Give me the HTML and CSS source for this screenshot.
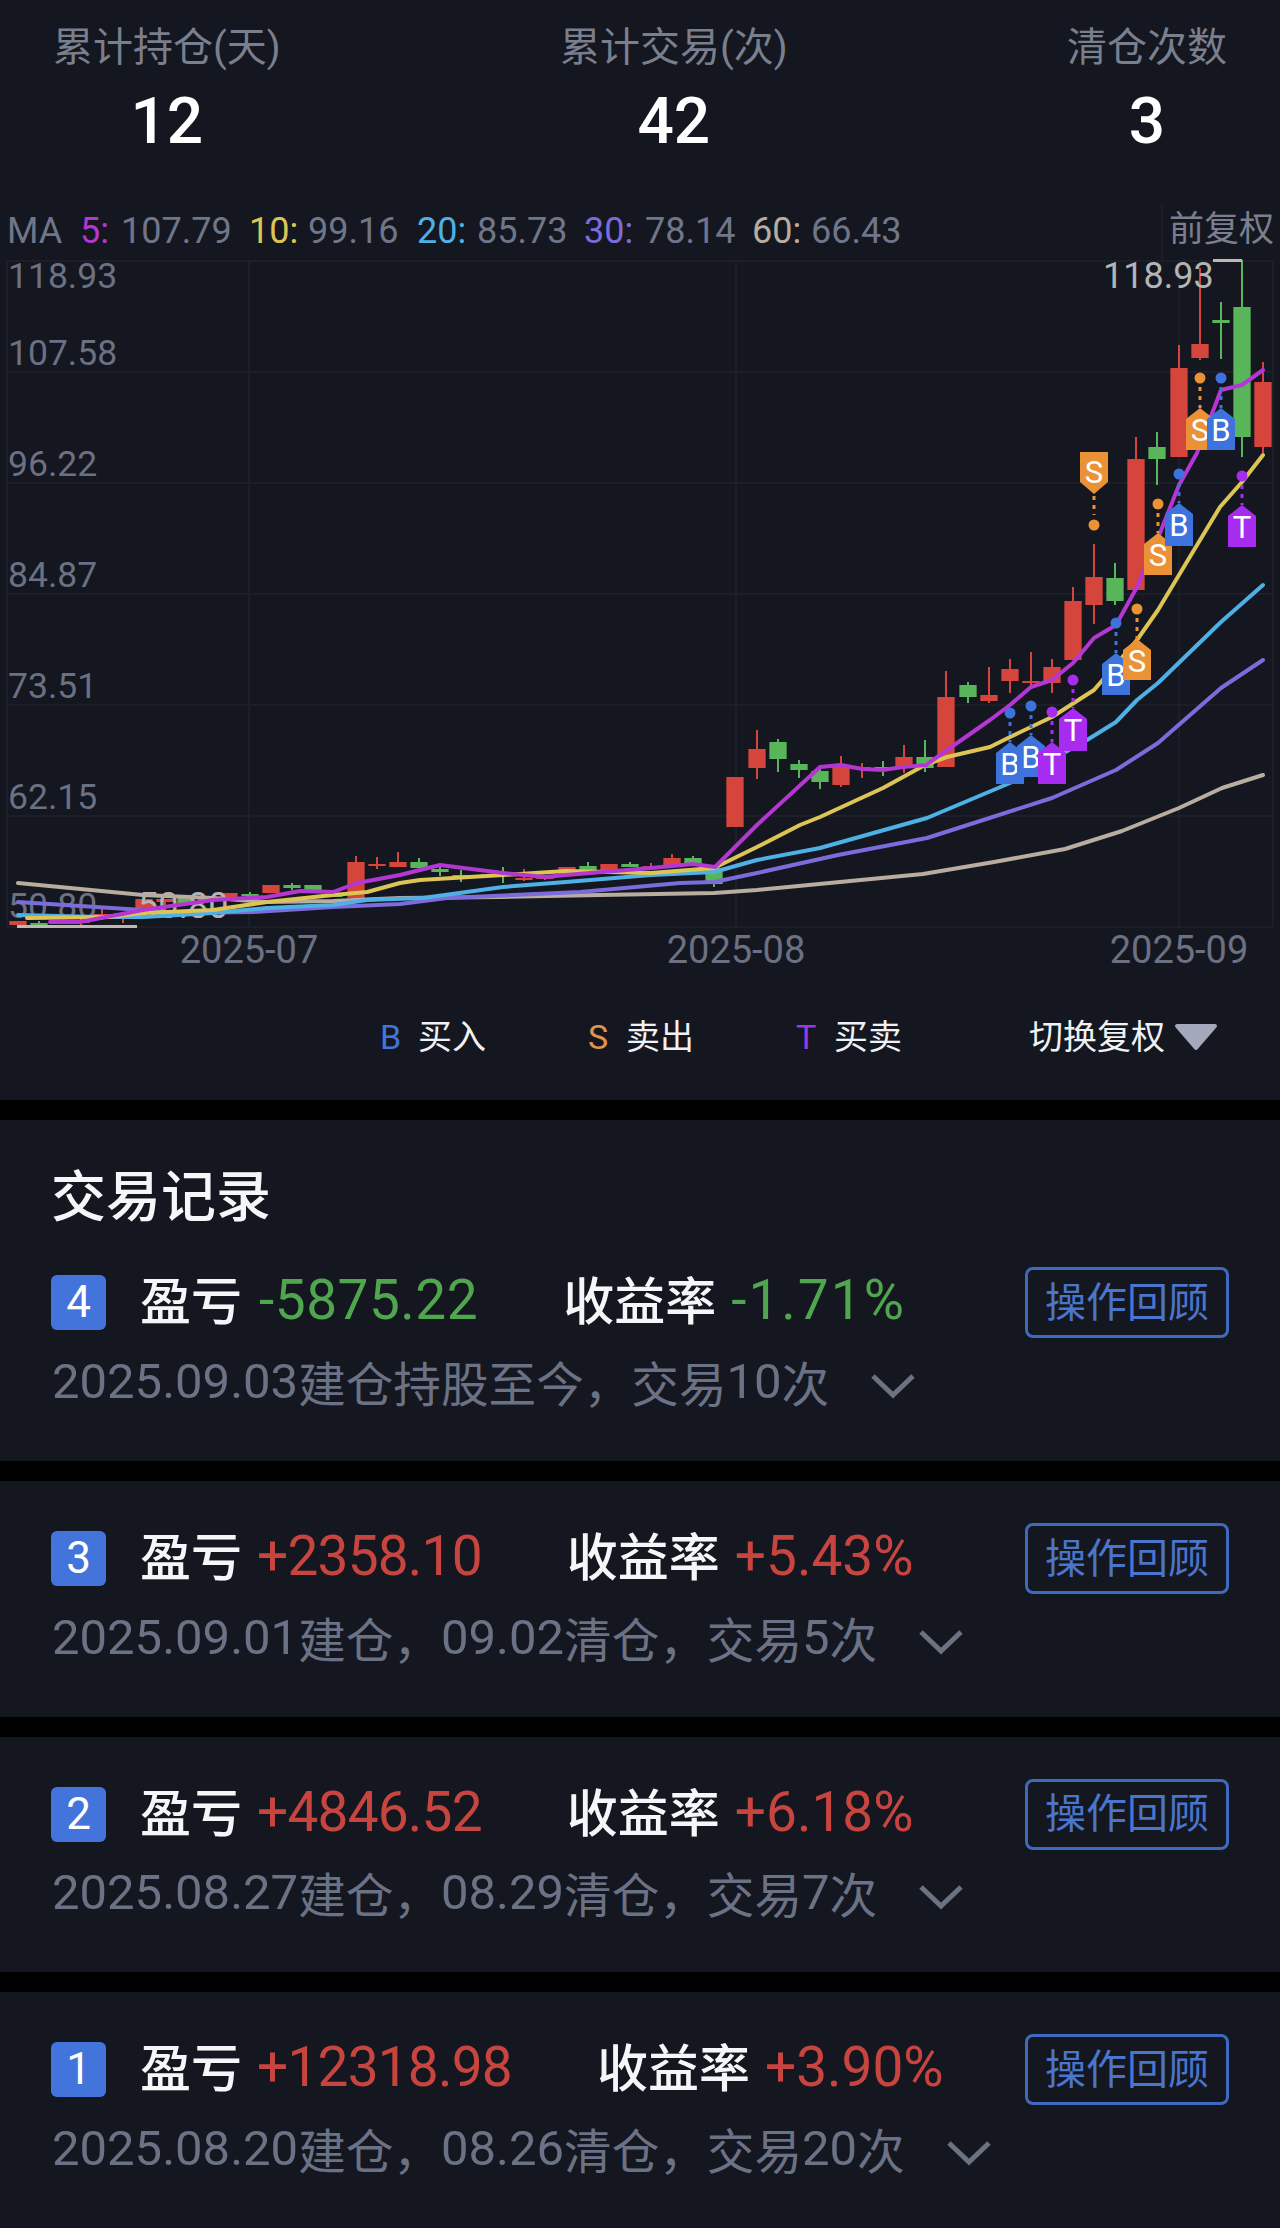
FILE: index.html
```html
<!DOCTYPE html>
<html lang="zh-CN">
<head>
<meta charset="utf-8">
<title>交易记录</title>
<link rel="stylesheet" href="styles.css">
</head>
<body>
<main class="page">
  <section class="panel">
    <div class="stats">
      <div class="stat"><div class="stat-label">累计持仓(天)</div><div class="stat-value">12</div></div>
      <div class="stat"><div class="stat-label">累计交易(次)</div><div class="stat-value">42</div></div>
      <div class="stat"><div class="stat-label">清仓次数</div><div class="stat-value">3</div></div>
    </div>
    <svg class="chart" viewBox="0 200 1280 780" width="1280" height="780">
      <path class="grid" d="M7 261H1273M7 372H1273M7 483H1273M7 594H1273M7 705H1273M7 816H1273M7 927H1273M7 261V927M249 261V927M736 261V927M1179 261V927M1273 261V927M1162 205V261"/>

      <text class="ma" y="243"><tspan x="7">MA</tspan><tspan x="80" class="k5">5:</tspan><tspan x="121">107.79</tspan><tspan x="249" class="k10">10:</tspan><tspan x="308">99.16</tspan><tspan x="417" class="k20">20:</tspan><tspan x="477">85.73</tspan><tspan x="584" class="k30">30:</tspan><tspan x="645">78.14</tspan><tspan x="752" class="k60">60:</tspan><tspan x="811">66.43</tspan></text>
      <text class="cn-label" x="1169" y="241">前复权</text>

      <g class="axis">
        <text x="8" y="288">118.93</text>
        <text x="8" y="365">107.58</text>
        <text x="8" y="476">96.22</text>
        <text x="8" y="587">84.87</text>
        <text x="8" y="698">73.51</text>
        <text x="8" y="809">62.15</text>
        <text x="8" y="918">50.80</text>
      </g>
      <g class="dates">
        <text x="249" y="963">2025-07</text>
        <text x="736" y="963">2025-08</text>
        <text x="1179" y="963">2025-09</text>
      </g>

      <path class="wick up" d="M102 908V920M123 912V923M165 899V912M356 856V898M377 857V869M398 852V867M482 874V878M524 869V881M545 875V880M651 863V870M672 854V865M757 730V779M841 756V787M862 763V778M904 745V773M946 671V767M989 667V703M1010 659V693M1031 652V687M1052 659V693M1073 587V660M1094 544V624M1136 437V590M1179 345V457M1200 268V360M1263 362V453M81 919V925"/>
      <path class="wick down" d="M39 921V926M250 892V897M292 883V890M419 858V868M440 865V876M461 870V882M503 867V883M588 862V871M630 862V867M693 856V865M714 868V887M778 739V772M799 760V778M820 768V789M883 761V776M925 740V772M968 682V703M1115 563V605M1157 432V485M1221 302V359M1242 260V457"/>
      <path class="body up" d="M18 921V925M60 922V924M81 921V923M102 914V916M123 913V915M144 899V913M165 899V902M207 897V901M229 893V900M271 885V893M356 862V898M377 864V866M398 862V867M482 875V877M524 878V880M545 877V879M567 867V875M609 864V873M651 866V869M672 858V865M735 777V827M757 749V768M841 765V785M862 767V769M904 757V767M946 697V767M989 695V701M1010 669V681M1031 681V683M1052 667V683M1073 601V660M1094 577V605M1136 459V590M1179 368V457M1200 344V358M1263 382V447"/>
      <path class="body down" d="M39 923V925M186 898V903M250 894V896M292 885V888M313 885V890M334 895V897M419 862V868M440 869V872M461 875V877M503 874V876M588 866V871M630 864V867M693 858V865M714 868V884M778 742V759M799 764V770M820 771V782M883 767V769M925 757V768M968 685V697M1115 578V601M1157 447V459M1221 320V323M1242 307V437"/>

      <text class="extreme" x="1103" y="288">118.93</text>
      <text class="extreme" x="138" y="918">50.80</text>
      <path class="leader" d="M1213 260.500H1242M17 926.500H137"/>

      <polyline class="line l60" points="18,883 143,895 213,898 267,902 333,901 400,898 500,897 600,895 714,893 757,890 840,882 923,874 994,862 1065,849 1122,831 1179,808 1222,788 1263,775"/>
      <polyline class="line l30" points="18,902 143,910 180,913 253,912 333,907 400,904 447,898 580,892 680,883 714,882 757,873 838,855 927,838 1052,798 1116,770 1158,743 1221,688 1263,660"/>
      <polyline class="line l20" points="18,915 100,917 143,917 213,913 267,908 333,905 367,900 423,898 503,887 566,882 651,875 714,872 757,860 820,848 927,818 1010,783 1087,740 1116,722 1137,700 1158,683 1221,622 1263,585"/>
      <polyline class="line l10" points="27,918 110,917 143,913 213,910 267,902 333,895 367,892 400,883 420,880 503,875 566,871 651,873 714,868 757,847 800,825 820,817 883,788 925,765 947,757 990,747 1010,737 1052,717 1094,690 1137,640 1158,610 1188,560 1220,507 1242,482 1263,455"/>
      <polyline class="line l5" points="50,922 80,922 143,910 213,900 267,897 300,891 333,892 357,883 400,875 440,865 503,873 545,877 566,875 651,868 693,864 715,867 757,825 820,767 841,765 862,769 883,770 903,767 926,765 950,748 990,720 1010,705 1031,687 1052,680 1073,663 1094,638 1116,625 1137,587 1160,533 1179,485 1197,453 1221,390 1242,385 1263,370"/>

      <g class="mark sell"><circle cx="1094" cy="525" r="5.500"/><path class="stem" d="M1094 496V515"/><path d="M1080 452H1108V482L1094 494L1080 482Z"/><text x="1094" y="483">S</text></g>
      <g class="mark buy"><circle cx="1010" cy="713" r="5.500"/><path class="stem" d="M1010 722V742"/><path d="M996 753L1010 742L1024 753V784H996Z"/><text x="1010" y="775">B</text></g>
      <g class="mark buy"><circle cx="1031" cy="706" r="5.500"/><path class="stem" d="M1031 715V735"/><path d="M1017 746L1031 735L1045 746V777H1017Z"/><text x="1031" y="768">B</text></g>
      <g class="mark trade"><circle cx="1052" cy="712" r="5.500"/><path class="stem" d="M1052 721V742"/><path d="M1038 753L1052 742L1066 753V784H1038Z"/><text x="1052" y="775">T</text></g>
      <g class="mark trade"><circle cx="1073" cy="680" r="5.500"/><path class="stem" d="M1073 689V708"/><path d="M1059 719L1073 708L1087 719V751H1059Z"/><text x="1073" y="741">T</text></g>
      <g class="mark buy"><circle cx="1116" cy="623" r="5.500"/><path class="stem" d="M1116 632V653"/><path d="M1102 664L1116 653L1130 664V695H1102Z"/><text x="1116" y="686">B</text></g>
      <g class="mark sell"><circle cx="1137" cy="609" r="5.500"/><path class="stem" d="M1137 618V639"/><path d="M1123 650L1137 639L1151 650V680H1123Z"/><text x="1137" y="672">S</text></g>
      <g class="mark sell"><circle cx="1158" cy="504" r="5.500"/><path class="stem" d="M1158 513V533"/><path d="M1144 544L1158 533L1172 544V575H1144Z"/><text x="1158" y="566">S</text></g>
      <g class="mark buy"><circle cx="1179" cy="474" r="5.500"/><path class="stem" d="M1179 483V503"/><path d="M1165 514L1179 503L1193 514V546H1165Z"/><text x="1179" y="536">B</text></g>
      <g class="mark sell"><circle cx="1200" cy="378" r="5.500"/><path class="stem" d="M1200 387V408"/><path d="M1186 419L1200 408L1214 419V450H1186Z"/><text x="1200" y="441">S</text></g>
      <g class="mark buy"><circle cx="1221" cy="378" r="5.500"/><path class="stem" d="M1221 387V408"/><path d="M1207 419L1221 408L1235 419V450H1207Z"/><text x="1221" y="441">B</text></g>
      <g class="mark trade"><circle cx="1242" cy="476" r="5.500"/><path class="stem" d="M1242 485V505"/><path d="M1228 516L1242 505L1256 516V547H1228Z"/><text x="1242" y="538">T</text></g>
    </svg>
    <div class="legend">
      <div class="legend-item"><span class="letter buy-text">B</span>买入</div>
      <div class="legend-item"><span class="letter sell-text">S</span>卖出</div>
      <div class="legend-item"><span class="letter trade-text">T</span>买卖</div>
      <div class="toggle">切换复权<svg class="toggle-arrow" viewBox="0 0 44 28" width="44" height="28"><path d="M3 3H41L22 25Z"/></svg></div>
    </div>
  </section>

  <section class="panel records">
    <h2 class="records-title">交易记录</h2>
    <article class="record">
      <div class="record-main">
        <span class="badge">4</span><span class="term">盈亏</span><span class="amount pnl loss">-5875.22</span><span class="term term-rate">收益率</span><span class="amount rate-wide loss">-1.71%</span>
        <button class="review">操作回顾</button>
      </div>
      <div class="record-sub"><span class="digits">2025.09.03</span>建仓持股至今，交易<span class="digits">10</span>次<svg class="chevron" viewBox="0 0 44 26" width="44" height="26"><path d="M2 3L22 22L42 3"/></svg></div>
    </article>
  </section>

  <section class="panel record">
    <div class="record-main">
      <span class="badge">3</span><span class="term">盈亏</span><span class="amount pnl gain">+2358.10</span><span class="term term-rate">收益率</span><span class="amount gain">+5.43%</span>
      <button class="review">操作回顾</button>
    </div>
    <div class="record-sub"><span class="digits">2025.09.01</span>建仓，<span class="digits">09.02</span>清仓，交易<span class="digits">5</span>次<svg class="chevron" viewBox="0 0 44 26" width="44" height="26"><path d="M2 3L22 22L42 3"/></svg></div>
  </section>

  <section class="panel record">
    <div class="record-main">
      <span class="badge">2</span><span class="term">盈亏</span><span class="amount pnl gain">+4846.52</span><span class="term term-rate">收益率</span><span class="amount gain">+6.18%</span>
      <button class="review">操作回顾</button>
    </div>
    <div class="record-sub"><span class="digits">2025.08.27</span>建仓，<span class="digits">08.29</span>清仓，交易<span class="digits">7</span>次<svg class="chevron" viewBox="0 0 44 26" width="44" height="26"><path d="M2 3L22 22L42 3"/></svg></div>
  </section>

  <section class="panel record">
    <div class="record-main">
      <span class="badge">1</span><span class="term">盈亏</span><span class="amount pnl gain">+12318.98</span><span class="term term-rate">收益率</span><span class="amount gain">+3.90%</span>
      <button class="review">操作回顾</button>
    </div>
    <div class="record-sub"><span class="digits">2025.08.20</span>建仓，<span class="digits">08.26</span>清仓，交易<span class="digits">20</span>次<svg class="chevron" viewBox="0 0 44 26" width="44" height="26"><path d="M2 3L22 22L42 3"/></svg></div>
  </section>
</main>
</body>
</html>
```
FILE: styles.css
```css
* { box-sizing: border-box; }
html, body { margin: 0; padding: 0; background: #000; }
body { font-family: Roboto, "Noto Sans CJK SC", sans-serif; color: #fff; }
.page { width: 1280px; height: 2228px; display: flex; flex-direction: column; gap: 20px; overflow: hidden; }
.panel { background: #141720; }

.stats { height: 200px; padding: 21px 53px 0; display: flex; justify-content: space-between; }
.stat { text-align: center; }
.stat-label { font-size: 40px; line-height: 54px; color: #7a7f8e; }
.stat-value { font-size: 64px; line-height: 74px; margin-top: 10px; font-weight: 500; color: #fff; }

.chart { display: block; font-family: Roboto, "Noto Sans CJK SC", sans-serif; }
.grid { fill: none; stroke: #1c1f27; stroke-width: 2; }
.ma { font-size: 36px; fill: #70768a; }
.k5 { fill: #b437d4; }
.k10 { fill: #dcc555; }
.k20 { fill: #4fb0e6; }
.k30 { fill: #7c6bdb; }
.k60 { fill: #b8ad9f; }
.cn-label { font-size: 35px; fill: #7a7f8e; }
.axis text { font-size: 35.500px; fill: #6b7183; }
.dates text { font-size: 38px; fill: #6b7183; text-anchor: middle; }
.extreme { font-size: 36px; fill: #b4b4b4; }
.leader { fill: none; stroke: #bdb9b2; stroke-width: 3; }

.wick { fill: none; stroke-width: 2; }
.body { fill: none; stroke-width: 17.300; }
.up { stroke: #d6453b; }
.down { stroke: #58b55a; }

.line { fill: none; stroke-width: 4; stroke-linejoin: round; stroke-linecap: round; }
.l5 { stroke: #b437d4; }
.l10 { stroke: #dcc555; }
.l20 { stroke: #4fb0e6; }
.l30 { stroke: #7c6bdb; }
.l60 { stroke: #b8ad9f; }

.mark text { font-size: 31px; fill: #fff; text-anchor: middle; stroke: none; }
.mark .stem { fill: none; stroke-width: 3; stroke-dasharray: 4 5; }
.sell path, .sell circle { fill: #ea9235; }
.buy path, .buy circle { fill: #3e72dc; }
.trade path, .trade circle { fill: #a72cf0; }
.sell .stem { stroke: #ea9235; fill: none; }
.buy .stem { stroke: #3e72dc; fill: none; }
.trade .stem { stroke: #a72cf0; fill: none; }

.legend { height: 120px; padding: 33px 0 0 380px; display: flex; align-items: flex-start; font-size: 34px; line-height: 48px; color: #f0f1f4; }
.legend-item { width: 208px; display: flex; }
.letter { width: 38px; }
.buy-text { color: #4374dc; }
.sell-text { color: #e0954a; }
.trade-text { color: #9a38e6; }
.toggle { margin-left: 25px; display: flex; align-items: center; gap: 9px; }
.toggle-arrow { display: block; margin-top: -1px; }
.toggle-arrow path { fill: #a3a9bb; stroke: #a3a9bb; stroke-width: 4; stroke-linejoin: round; }

.records-title { margin: 0; height: 105px; padding: 47px 0 0 51px; font-size: 55px; line-height: 60px; font-weight: 500; color: #f5f6f8; }
.record { height: 236px; padding: 42px 51px 0; }
.records { height: 341px; }
.record-main { height: 71px; display: flex; align-items: center; }
.badge { width: 55px; height: 55px; border-radius: 6px; background: #4374dc; color: #fff; font-size: 44px; line-height: 55px; text-align: center; margin-right: 34px; }
.term { font-size: 51px; font-weight: 500; color: #f5f6f8; line-height: 71px; }
.term-rate { margin-left: 85px; }
.amount { font-size: 55px; line-height: 67px; padding-bottom: 4px; margin-left: 15px; }
.pnl.gain { letter-spacing: -0.800px; }
.pnl.loss { letter-spacing: 0.500px; margin-left: 17px; }
.rate-wide { letter-spacing: 2px; }
.loss { color: #4fa64f; }
.gain { color: #c8453f; }
.review { margin-left: auto; width: 204px; height: 71px; padding: 0; background: transparent; border: 3px solid #3f69c0; border-radius: 8px; color: #4a75cc; font: 41px/62px Roboto, "Noto Sans CJK SC", sans-serif; }
.record-sub { margin-top: 12px; height: 62px; padding-left: 1px; display: flex; align-items: center; font-size: 47.600px; color: #6b7285; white-space: pre; }
.digits { font-size: 49px; }
.chevron { margin-left: 42px; margin-top: 9px; flex: none; }
.chevron path { fill: none; stroke: #6b7282; stroke-width: 5; }
```
